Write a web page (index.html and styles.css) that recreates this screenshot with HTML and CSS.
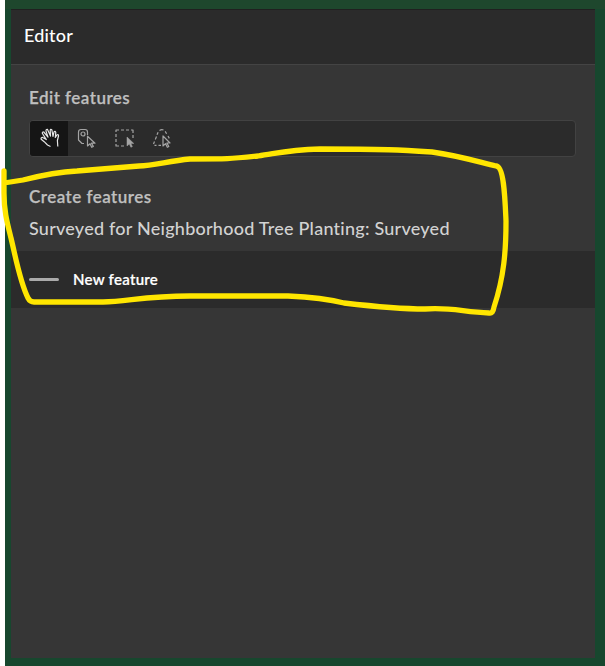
FILE: index.html
```html
<!DOCTYPE html>
<html lang="en">
<head>
<meta charset="utf-8">
<title>Editor</title>
<link rel="stylesheet" href="styles.css">
</head>
<body>
<div class="frame">
  <main class="panel">
    <header class="header"><h1 class="title">Editor</h1></header>
    <section class="edit">
      <h2 class="heading edit-heading">Edit features</h2>
      <div class="toolbar">
        <button class="tool active" aria-label="Pan">
          <svg class="icon" viewBox="0 0 20 20"><path d="M10.5 18.5 7.5 17 4.2 13.7 1.2 11.2Q.6 9.7 2.2 9.3L6.3 11.6 2.3 5.2Q2.2 3.6 3.8 4L8 9.1 6 3.1Q5.9 1.2 7.5 1.4L10.5 8.1 10.2 2.2Q10.7.7 11.9 2L13 8.4 14 3.8Q15.2 2.6 15.8 4.4L15.3 9.5 16.9 7Q18.7 5.9 18.5 8L17.4 12.5 17.8 18.5"/></svg>
        </button>
        <button class="tool" aria-label="Select feature">
          <svg class="icon" viewBox="0 0 20 20"><path d="M7 15.5H5L1.5 12V4Q1.5 1.5 4 1.5H8Q10.5 1.5 10.5 4V7"/><circle cx="6" cy="6" r="2"/><path d="M10.5 8.2V18l2.5-2.3 1.7 3.6 1.6-.9-1.8-3.2H18z"/></svg>
        </button>
        <button class="tool" aria-label="Select by rectangle">
          <svg class="icon" viewBox="0 0 20 20"><path class="dash" d="M1 4V2h3M6 2h3M11 2h3M16 2h2v3M1 6v3M1 11v3M1 16v2h3M6 18h3M18 7v3"/><path class="solid" d="M12 9v9l2.3-2 1.6 3.3 1.5-.8-1.6-3.1h3z"/></svg>
        </button>
        <button class="tool" aria-label="Select by lasso">
          <svg class="icon" viewBox="0 0 20 20"><path class="dash" d="m1.5 16 1-2.5M3.3 11.5l1.2-3M5 6.8l1.1-2.6M7.5 2.5Q9.5 1.1 11.5 2M13.2 3.4l1.4 2.4M16 8l1.3 2.4M2.5 17.3h2M6.5 17.3H9"/><path d="M11 8v10l2.5-2.4 1.8 3.7 1.5-.8-1.9-3.5H18z"/></svg>
        </button>
      </div>
    </section>
    <section class="create">
      <h2 class="heading create-heading">Create features</h2>
      <h3 class="layer">Surveyed for Neighborhood Tree Planting: Surveyed</h3>
      <div class="template"><span class="swatch"></span><span class="template-name">New feature</span></div>
    </section>
  </main>
</div>
<svg class="annotation" viewBox="0 0 605 666" aria-hidden="true"><path d="M4 171V193C4 211 7 222 11 238C16 259 20 282 28 298Q30 302 34 302H103C127 302 143 296 190 296H288C309 297 324 298 344 303C370 306 397 309 425 309C451 307 463 312 489 313Q493 314 494 307C504 277 506 251 506 221C505 198 504 166 496 166C482 163 461 156 432 152C401 150 385 149 320 149C287 150 279 153 258 156C229 159 228 159 190 159C168 161 154 166 139 166L77 171C57 172 35 177 23 180L4 183"/></svg>
</body>
</html>
```

FILE: styles.css
```css
* { box-sizing: border-box; }
body { margin: 0; background: #fff; font-family: Lato, "Liberation Sans", sans-serif; }
h1, h2, h3 { margin: 0; white-space: nowrap; }
.frame {
  height: 666px;
  margin-left: 5px;
  padding: 0 10px 8px 6px;
  background: #17472e;
  border-top: 9px solid #1e472d;
}
.panel { height: 649px; background: #363636; border-top: 1px solid #202020; }
.header { height: 55px; padding: 13px 13px 0; background: #2b2b2b; border-bottom: 1px solid #444; }
.title { color: #fff; font-size: 18px; line-height: 24px; font-weight: 500; letter-spacing: .2px; }
.edit { padding: 21px 19px 0 18px; }
.heading { color: #bfbfbf; font-size: 17px; line-height: 24px; font-weight: 600; letter-spacing: .47px; -webkit-text-stroke: .25px currentColor; }
.toolbar {
  display: flex;
  height: 37px;
  margin-top: 10px;
  overflow: hidden;
  background: #2b2b2b;
  border: 1px solid #424242;
  border-radius: 4px;
}
.tool {
  display: flex;
  align-items: center;
  justify-content: center;
  width: 37.5px;
  padding: 0 0 1px 1px;
  color: #a4a4a4;
  background: none;
  border: 0;
}
.tool.active { width: 38px; padding-left: 2px; color: #e6e6e6; background: #151515; }
.icon { width: 20px; height: 20px; fill: none; stroke: currentColor; stroke-width: 1.2; stroke-linejoin: round; }
.icon .solid { fill: currentColor; stroke-width: .5; }
.create { padding-top: 28px; }
.create .heading, .layer { padding-left: 18px; }
.layer { margin-top: 7px; color: #d2d2d2; font-size: 18px; line-height: 24px; font-weight: 500; letter-spacing: .24px; }
.template { display: flex; align-items: center; gap: 14px; height: 57px; margin-top: 11px; padding: 0 0 1px 18px; background: #2b2b2b; }
.swatch { width: 30px; height: 3px; border-radius: 2px; background: #aaa; }
.template-name { margin-top: -1px; color: #fff; font-size: 15px; line-height: 20px; font-weight: 600; letter-spacing: .27px; -webkit-text-stroke: .2px currentColor; }
.annotation {
  position: absolute;
  inset: 0;
  width: 605px;
  height: 666px;
  fill: none;
  stroke: #ffe600;
  stroke-width: 5.3;
  stroke-linecap: round;
  stroke-linejoin: round;
  pointer-events: none;
}
```
